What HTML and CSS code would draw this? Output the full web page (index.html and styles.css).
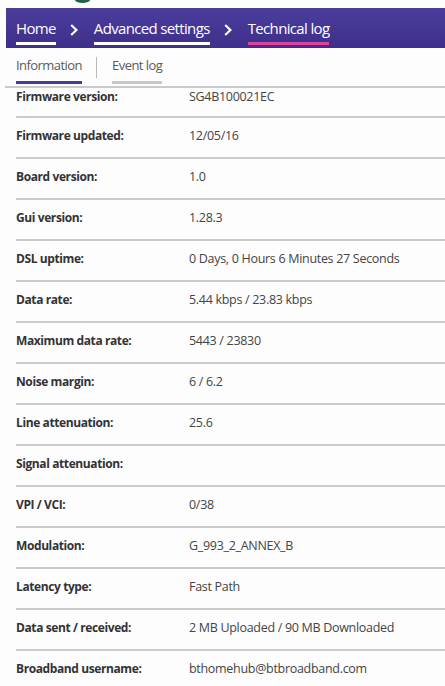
FILE: index.html
```html
<!DOCTYPE html>
<html lang="en">
<head>
<meta charset="utf-8">
<title>Technical log</title>
<link rel="stylesheet" href="styles.css">
</head>
<body>
<div class="top">
  <span class="logo-bit"></span>
</div>
<nav class="crumbs">
  <a class="crumb">Home</a>
  <svg class="chev" width="8" height="12" viewBox="0 0 8 12"><path d="M1.2 1 L6.4 6 L1.2 11" fill="none" stroke="#fff" stroke-width="2.2"/></svg>
  <a class="crumb">Advanced settings</a>
  <svg class="chev" width="8" height="12" viewBox="0 0 8 12"><path d="M1.2 1 L6.4 6 L1.2 11" fill="none" stroke="#fff" stroke-width="2.2"/></svg>
  <a class="crumb current">Technical log</a>
</nav>
<div class="tabs">
  <span class="tab active">Information</span>
  <span class="tab-sep"></span>
  <span class="tab">Event log</span>
</div>
<ul class="info">
  <li class="row first"><span class="label">Firmware version:</span><span class="value">SG4B100021EC</span></li>
  <li class="row"><span class="label">Firmware updated:</span><span class="value">12/05/16</span></li>
  <li class="row"><span class="label">Board version:</span><span class="value">1.0</span></li>
  <li class="row"><span class="label">Gui version:</span><span class="value">1.28.3</span></li>
  <li class="row"><span class="label">DSL uptime:</span><span class="value">0 Days, 0 Hours 6 Minutes 27 Seconds</span></li>
  <li class="row"><span class="label">Data rate:</span><span class="value">5.44 kbps / 23.83 kbps</span></li>
  <li class="row"><span class="label">Maximum data rate:</span><span class="value">5443 / 23830</span></li>
  <li class="row"><span class="label">Noise margin:</span><span class="value">6 / 6.2</span></li>
  <li class="row"><span class="label">Line attenuation:</span><span class="value">25.6</span></li>
  <li class="row"><span class="label">Signal attenuation:</span><span class="value"></span></li>
  <li class="row"><span class="label">VPI / VCI:</span><span class="value">0/38</span></li>
  <li class="row"><span class="label">Modulation:</span><span class="value">G_993_2_ANNEX_B</span></li>
  <li class="row"><span class="label">Latency type:</span><span class="value">Fast Path</span></li>
  <li class="row"><span class="label">Data sent / received:</span><span class="value">2 MB Uploaded / 90 MB Downloaded</span></li>
  <li class="row"><span class="label">Broadband username:</span><span class="value">bthomehub@btbroadband.com</span></li>
</ul>
</body>
</html>
```
FILE: styles.css
```css
html, body {
  margin: 0;
  padding: 0;
  background: #fdfdfd;
  font-family: "Open Sans", "Liberation Sans", sans-serif;
  color: #333;
  overflow: hidden;
}

.top {
  height: 8px;
  display: flex;
  align-items: flex-start;
  overflow: hidden;
}

.logo-bit {
  display: block;
  margin-left: 75px;
  width: 15px;
  height: 6px;
  margin-top: -3px;
  border-radius: 50%;
  background: #2a5e4a;
}

.crumbs {
  margin-left: 6px;
  height: 40px;
  box-sizing: border-box;
  padding-left: 10px;
  display: flex;
  align-items: flex-start;
  background: linear-gradient(#4b3d9d, #3e2f8a);
}

.crumb {
  color: #fff;
  font-size: 15px;
  letter-spacing: -0.65px;
  line-height: 20px;
  padding-top: 10px;
  padding-bottom: 4px;
  border-bottom: 3px solid #fff;
  white-space: nowrap;
}

.crumb.current {
  border-bottom-color: #e0409c;
}

.chev {
  margin: 16px 16px 0 14px;
  flex: none;
}

.tabs {
  margin-left: 5px;
  height: 40px;
  box-sizing: border-box;
  border-bottom: 2px solid #cacaca;
  padding-left: 11px;
  display: flex;
  align-items: flex-start;
}

.tab {
  font-size: 13px;
  letter-spacing: -0.55px;
  color: #5a5a5a;
  line-height: 18px;
  padding-top: 8px;
  padding-bottom: 7px;
  border-bottom: 3px solid #c8c8c8;
}

.tab.active {
  border-bottom-color: #4a3a90;
}

.tab-sep {
  width: 1px;
  height: 21px;
  margin: 9px 15px 0 14px;
  background: #b8b8b8;
}

.info {
  list-style: none;
  margin: 0 0 0 16px;
  padding: 0;
}

.row {
  display: flex;
  padding: 9px 0 12px;
  line-height: 18px;
  border-bottom: 2px solid #cacaca;
}

.row.first {
  padding-top: 0;
  padding-bottom: 10px;
}

.label {
  width: 173px;
  flex: none;
  font-size: 12px;
  font-weight: 700;
  letter-spacing: -0.4px;
  color: #333;
}

.value {
  font-size: 12.5px;
  letter-spacing: -0.3px;
  color: #444;
}
```
